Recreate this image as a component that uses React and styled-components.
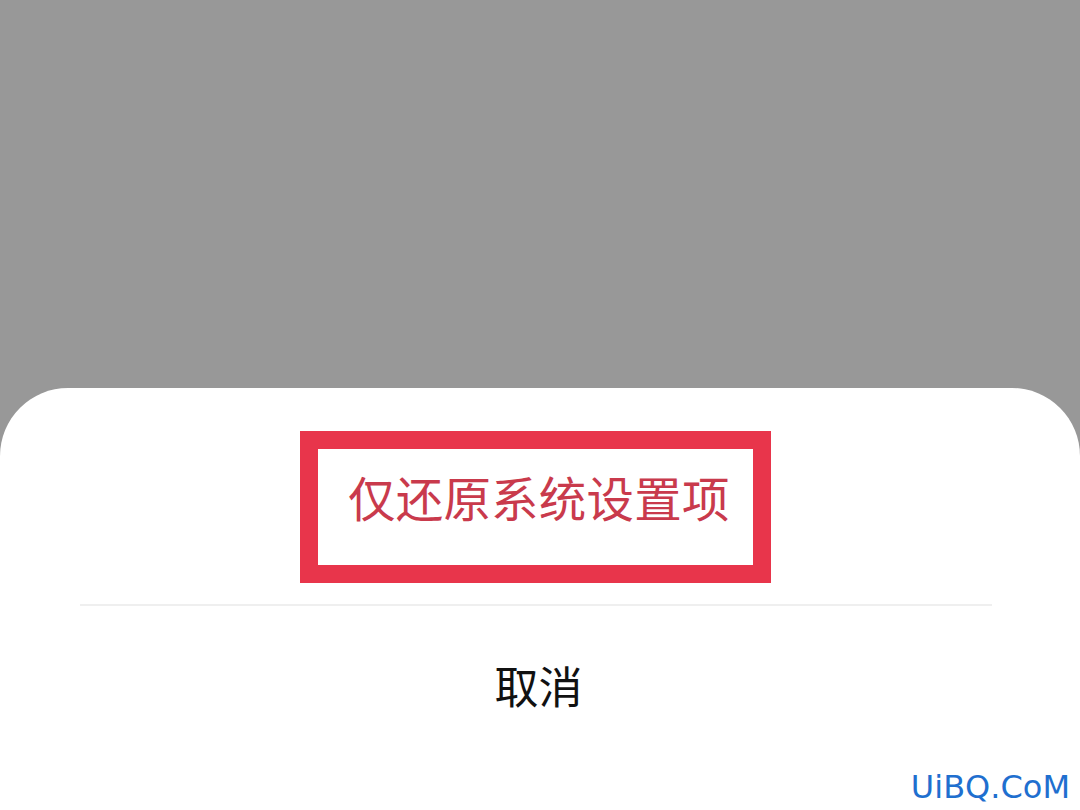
import React from "react";
import styled, {createGlobalStyle} from "styled-components";

const GlobalStyle = createGlobalStyle`
    html, body {
        margin: 0;
        padding: 0;
        background: #989898;
    }
    #root {
        width: 1080px;
        height: 810px;
        overflow: hidden;
    }
`;

const Screen = styled.div`
    position: relative;
    width: 1080px;
    height: 810px;
    display: flex;
    flex-direction: column;
    background: #989898;
    font-family: "Noto Sans CJK SC", "Noto Sans", sans-serif;
`;

const Dimmer = styled.div`
    height: 388px;
    flex-shrink: 0;
`;

const Sheet = styled.div`
    flex: 1;
    display: flex;
    flex-direction: column;
    background: #ffffff;
    border-radius: 68px 68px 0 0;
    padding-top: 43px;
`;

const OptionRow = styled.div`
    display: flex;
    justify-content: center;
    padding-right: 9px;
`;

const HighlightBox = styled.div`
    width: 471px;
    height: 152px;
    box-sizing: border-box;
    border: 18px solid #e8354b;
    display: flex;
    align-items: center;
    padding: 0 0 20px 30px;
`;

const OptionText = styled.span`
    font-size: 47.5px;
    line-height: 1;
    color: #c93a4c;
    letter-spacing: 0.2px;
`;

const Divider = styled.div`
    height: 2px;
    margin: 21px 88px 0 80px;
    background: #efefef;
`;

const CancelRow = styled.div`
    height: 158px;
    display: flex;
    align-items: center;
    justify-content: center;
    padding-right: 3px;
`;

const CancelText = styled.span`
    font-size: 44px;
    line-height: 1;
    color: #111111;
`;

const Watermark = styled.div`
    position: absolute;
    right: 10px;
    bottom: 7px;
    font-family: "DejaVu Sans", sans-serif;
    font-size: 32px;
    color: #1f6fcf;
    line-height: 1;
`;

export default function App() {
    return (
        <>
            <GlobalStyle/>
            <Screen>
                <Dimmer/>
                <Sheet>
                    <OptionRow>
                        <HighlightBox>
                            <OptionText>仅还原系统设置项</OptionText>
                        </HighlightBox>
                    </OptionRow>
                    <Divider/>
                    <CancelRow>
                        <CancelText>取消</CancelText>
                    </CancelRow>
                </Sheet>
                <Watermark>UiBQ.CoM</Watermark>
            </Screen>
        </>
    );
}
